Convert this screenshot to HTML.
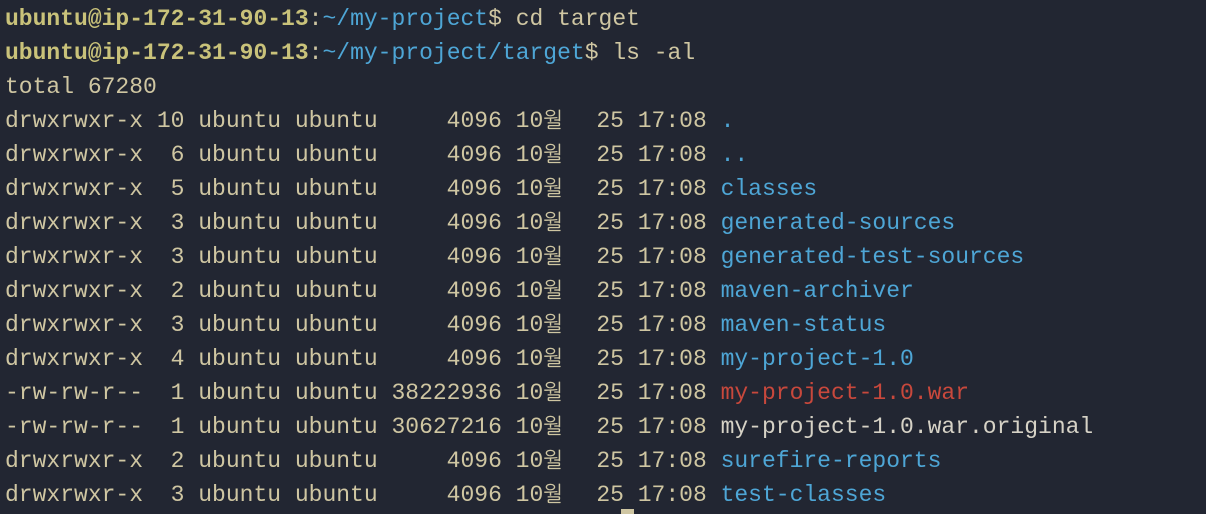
<!DOCTYPE html>
<html><head><meta charset="utf-8"><style>
html,body{margin:0;padding:0;background:#222632;width:1206px;height:514px;overflow:hidden}
pre{margin:0;position:absolute;left:5px;top:2px;font-family:"Liberation Mono","NanumGothic","Noto Sans CJK KR",monospace;font-size:23px;line-height:34px;color:#cfc6a2;white-space:pre}
.u{color:#c9c27a;font-weight:bold}
.b{color:#4ea6d6}
.r{color:#c8483c}
.g{color:#d6d2c6}
.k{display:inline-block;width:2ch;font-family:"NanumGothic","Noto Sans CJK KR",sans-serif;font-size:21px}
.cur{position:absolute;left:621px;top:509px;width:13px;height:5px;background:#cfc6a2}
</style></head><body>
<pre><span class="u">ubuntu@ip-172-31-90-13</span>:<span class="b">~/my-project</span>$ cd target
<span class="u">ubuntu@ip-172-31-90-13</span>:<span class="b">~/my-project/target</span>$ ls -al
total 67280
drwxrwxr-x 10 ubuntu ubuntu     4096 10<span class="k">월</span>  25 17:08 <span class="b">.</span>
drwxrwxr-x  6 ubuntu ubuntu     4096 10<span class="k">월</span>  25 17:08 <span class="b">..</span>
drwxrwxr-x  5 ubuntu ubuntu     4096 10<span class="k">월</span>  25 17:08 <span class="b">classes</span>
drwxrwxr-x  3 ubuntu ubuntu     4096 10<span class="k">월</span>  25 17:08 <span class="b">generated-sources</span>
drwxrwxr-x  3 ubuntu ubuntu     4096 10<span class="k">월</span>  25 17:08 <span class="b">generated-test-sources</span>
drwxrwxr-x  2 ubuntu ubuntu     4096 10<span class="k">월</span>  25 17:08 <span class="b">maven-archiver</span>
drwxrwxr-x  3 ubuntu ubuntu     4096 10<span class="k">월</span>  25 17:08 <span class="b">maven-status</span>
drwxrwxr-x  4 ubuntu ubuntu     4096 10<span class="k">월</span>  25 17:08 <span class="b">my-project-1.0</span>
-rw-rw-r--  1 ubuntu ubuntu 38222936 10<span class="k">월</span>  25 17:08 <span class="r">my-project-1.0.war</span>
-rw-rw-r--  1 ubuntu ubuntu 30627216 10<span class="k">월</span>  25 17:08 <span class="g">my-project-1.0.war.original</span>
drwxrwxr-x  2 ubuntu ubuntu     4096 10<span class="k">월</span>  25 17:08 <span class="b">surefire-reports</span>
drwxrwxr-x  3 ubuntu ubuntu     4096 10<span class="k">월</span>  25 17:08 <span class="b">test-classes</span></pre>
<div class="cur"></div>
</body></html>
